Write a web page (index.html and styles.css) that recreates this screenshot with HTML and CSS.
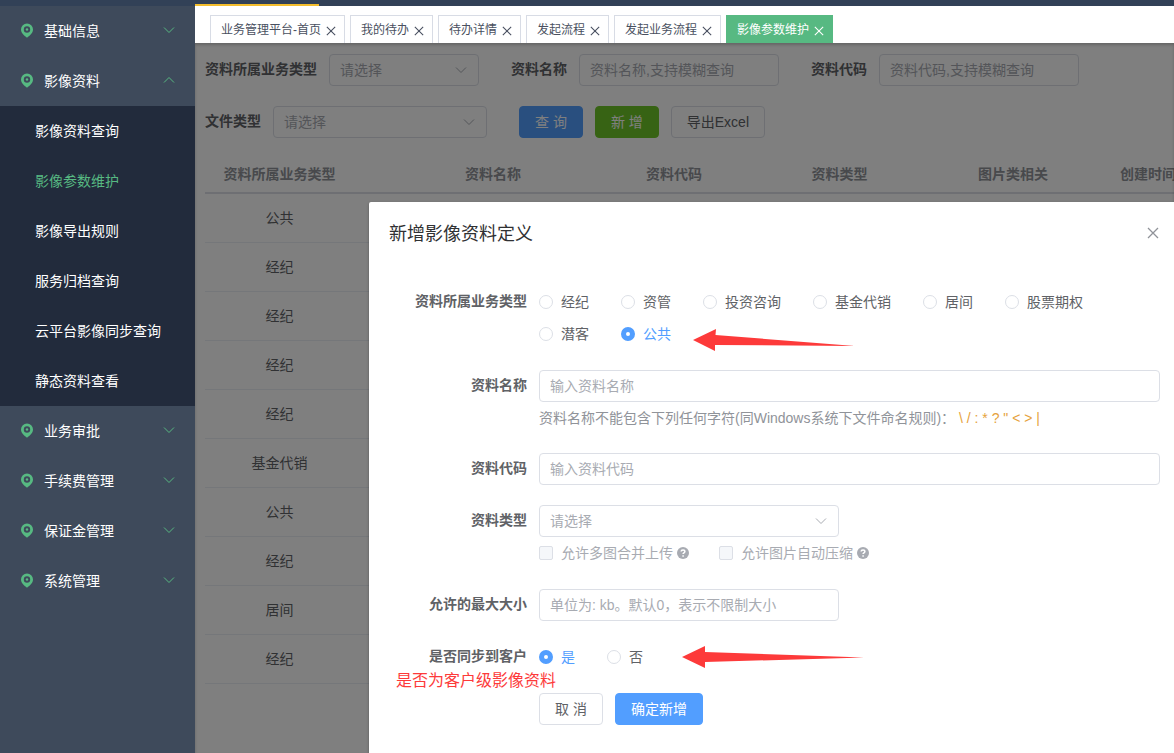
FILE: index.html
```html
<!DOCTYPE html>
<html lang="zh-CN">
<head>
  <meta charset="UTF-8">
  <meta name="viewport" content="width=device-width, initial-scale=1.0">
  <title>影像参数维护</title>
  <link rel="stylesheet" href="styles.css">
</head>
<body>
  <!-- Shared icons -->
  <svg class="icon-defs" aria-hidden="true">
    <symbol id="pin" viewBox="0 0 12 14">
      <path fill-rule="evenodd" d="M6 0a6 6 0 0 1 6 6c0 3.400-3 6-6 8.200C3 12 0 9.400 0 6a6 6 0 0 1 6-6zm0 2.800a3.200 3.200 0 1 0 0 6.400 3.200 3.200 0 0 0 0-6.400z"/>
      <circle cx="6" cy="6" r="1.200"/>
    </symbol>
    <symbol id="arrow-down" viewBox="0 0 12 12">
      <path d="M1 3.500l5 5 5-5" fill="none" stroke="currentColor"/>
    </symbol>
    <symbol id="arrow-up" viewBox="0 0 12 12">
      <path d="M1 8.500l5-5 5 5" fill="none" stroke="currentColor"/>
    </symbol>
    <symbol id="close" viewBox="0 0 12 12">
      <path d="M1 1l10 10M11 1L1 11" fill="none" stroke="currentColor" stroke-width="1.300"/>
    </symbol>
    <symbol id="question" viewBox="0 0 12 12">
      <circle cx="6" cy="6" r="6"/>
      <path d="M4.200 4.600c0-2.300 3.700-2.300 3.700 0 0 1.300-1.800 1.300-1.800 2.500M6.100 8.200v1.500" fill="none" stroke="#fff" stroke-width="1.500"/>
    </symbol>
  </svg>

  <header class="topbar">
    <div class="topbar-active"></div>
  </header>

  <div class="layout">
    <!-- Sidebar menu -->
    <nav class="sidebar">
      <a class="menu-item" href="#"><svg class="pin"><use href="#pin"/></svg><span>基础信息</span><svg class="arrow"><use href="#arrow-down"/></svg></a>
      <a class="menu-item" href="#"><svg class="pin"><use href="#pin"/></svg><span>影像资料</span><svg class="arrow"><use href="#arrow-up"/></svg></a>
      <div class="submenu">
        <a href="#">影像资料查询</a>
        <a class="active" href="#">影像参数维护</a>
        <a href="#">影像导出规则</a>
        <a href="#">服务归档查询</a>
        <a href="#">云平台影像同步查询</a>
        <a href="#">静态资料查看</a>
      </div>
      <a class="menu-item" href="#"><svg class="pin"><use href="#pin"/></svg><span>业务审批</span><svg class="arrow"><use href="#arrow-down"/></svg></a>
      <a class="menu-item" href="#"><svg class="pin"><use href="#pin"/></svg><span>手续费管理</span><svg class="arrow"><use href="#arrow-down"/></svg></a>
      <a class="menu-item" href="#"><svg class="pin"><use href="#pin"/></svg><span>保证金管理</span><svg class="arrow"><use href="#arrow-down"/></svg></a>
      <a class="menu-item" href="#"><svg class="pin"><use href="#pin"/></svg><span>系统管理</span><svg class="arrow"><use href="#arrow-down"/></svg></a>
    </nav>

    <div class="main">
      <!-- Opened pages -->
      <div class="tabs">
        <div class="tab"><a href="#">业务管理平台-首页</a><button type="button" aria-label="关闭"><svg><use href="#close"/></svg></button></div>
        <div class="tab"><a href="#">我的待办</a><button type="button" aria-label="关闭"><svg><use href="#close"/></svg></button></div>
        <div class="tab"><a href="#">待办详情</a><button type="button" aria-label="关闭"><svg><use href="#close"/></svg></button></div>
        <div class="tab"><a href="#">发起流程</a><button type="button" aria-label="关闭"><svg><use href="#close"/></svg></button></div>
        <div class="tab"><a href="#">发起业务流程</a><button type="button" aria-label="关闭"><svg><use href="#close"/></svg></button></div>
        <div class="tab active"><a href="#">影像参数维护</a><button type="button" aria-label="关闭"><svg><use href="#close"/></svg></button></div>
      </div>

      <div class="content">
        <!-- Search filters -->
        <form class="filters">
          <div class="filter">
            <label for="f-biz">资料所属业务类型</label>
            <div class="select select-small">
              <select id="f-biz"><option>请选择</option></select>
              <svg><use href="#arrow-down"/></svg>
            </div>
          </div>
          <div class="filter">
            <label for="f-name">资料名称</label>
            <input class="input filter-input" type="text" id="f-name" placeholder="资料名称,支持模糊查询">
          </div>
          <div class="filter">
            <label for="f-code">资料代码</label>
            <input class="input filter-input" type="text" id="f-code" placeholder="资料代码,支持模糊查询">
          </div>
          <div class="filter">
            <label for="f-file">文件类型</label>
            <div class="select select-medium">
              <select id="f-file"><option>请选择</option></select>
              <svg><use href="#arrow-down"/></svg>
            </div>
          </div>
          <div class="filter">
            <button class="btn btn-primary" type="button">查 询</button>
            <button class="btn btn-success" type="button">新 增</button>
            <button class="btn" type="button">导出Excel</button>
          </div>
        </form>

        <!-- Result list -->
        <table class="list">
          <colgroup>
            <col class="col-biz"><col class="col-name"><col class="col-code"><col class="col-type"><col class="col-image"><col>
          </colgroup>
          <thead>
            <tr><th>资料所属业务类型</th><th>资料名称</th><th>资料代码</th><th>资料类型</th><th>图片类相关</th><th>创建时间</th></tr>
          </thead>
          <tbody>
            <tr><td>公共</td><td></td><td></td><td></td><td></td><td></td></tr>
            <tr><td>经纪</td><td></td><td></td><td></td><td></td><td></td></tr>
            <tr><td>经纪</td><td></td><td></td><td></td><td></td><td></td></tr>
            <tr><td>经纪</td><td></td><td></td><td></td><td></td><td></td></tr>
            <tr><td>经纪</td><td></td><td></td><td></td><td></td><td></td></tr>
            <tr><td>基金代销</td><td></td><td></td><td></td><td></td><td></td></tr>
            <tr><td>公共</td><td></td><td></td><td></td><td></td><td></td></tr>
            <tr><td>经纪</td><td></td><td></td><td></td><td></td><td></td></tr>
            <tr><td>居间</td><td></td><td></td><td></td><td></td><td></td></tr>
            <tr><td>经纪</td><td></td><td></td><td></td><td></td><td></td></tr>
          </tbody>
        </table>

        <!-- Dialog -->
        <div class="mask">
          <div class="dialog" role="dialog" aria-labelledby="dialog-title">
            <div class="dialog-header">
              <h2 id="dialog-title">新增影像资料定义</h2>
              <button class="dialog-close" type="button" aria-label="关闭"><svg><use href="#close"/></svg></button>
            </div>

            <form class="form">
              <div class="form-label" id="l-biz">资料所属业务类型</div>
              <div class="options" role="radiogroup" aria-labelledby="l-biz">
                <label class="option"><input type="radio" name="biz"><span>经纪</span></label>
                <label class="option"><input type="radio" name="biz"><span>资管</span></label>
                <label class="option"><input type="radio" name="biz"><span>投资咨询</span></label>
                <label class="option"><input type="radio" name="biz"><span>基金代销</span></label>
                <label class="option"><input type="radio" name="biz"><span>居间</span></label>
                <label class="option"><input type="radio" name="biz"><span>股票期权</span></label>
                <label class="option"><input type="radio" name="biz"><span>潜客</span></label>
                <label class="option"><input type="radio" name="biz" checked><span>公共</span></label>
              </div>

              <label class="form-label" for="name">资料名称</label>
              <div>
                <input class="input" type="text" id="name" placeholder="输入资料名称">
                <div class="hint">资料名称不能包含下列任何字符(同Windows系统下文件命名规则)： <span class="chars">\ / : * ? " &lt; &gt; |</span></div>
              </div>

              <label class="form-label" for="code">资料代码</label>
              <div><input class="input" type="text" id="code" placeholder="输入资料代码"></div>

              <label class="form-label" for="type">资料类型</label>
              <div>
                <div class="select select-large">
                  <select id="type"><option>请选择</option></select>
                  <svg><use href="#arrow-down"/></svg>
                </div>
                <div class="options checks">
                  <label class="option"><input type="checkbox" disabled><span>允许多图合并上传</span><svg><use href="#question"/></svg></label>
                  <label class="option"><input type="checkbox" disabled><span>允许图片自动压缩</span><svg><use href="#question"/></svg></label>
                </div>
              </div>

              <label class="form-label" for="size">允许的最大大小</label>
              <div><input class="input size-input" type="text" id="size" placeholder="单位为: kb。默认0，表示不限制大小"></div>

              <div class="form-label" id="l-sync">是否同步到客户</div>
              <div class="options" role="radiogroup" aria-labelledby="l-sync">
                <label class="option"><input type="radio" name="sync" checked><span>是</span></label>
                <label class="option"><input type="radio" name="sync"><span>否</span></label>
              </div>

              <div class="form-buttons">
                <button class="btn" type="button">取 消</button>
                <button class="btn btn-primary" type="button">确定新增</button>
              </div>
            </form>

            <!-- Red notes drawn over the form -->
            <svg class="note-arrow note-arrow-top" viewBox="0 0 162 22">
              <path d="M0 11L23 0l-.500 6L162 17 22 16v6z"/>
            </svg>
            <svg class="note-arrow note-arrow-bottom" viewBox="0 0 182 22">
              <path d="M0 11L23 0v6l159 5.500L23 16v6z"/>
            </svg>
            <p class="note-text">是否为客户级影像资料</p>
          </div>
        </div>
      </div>
    </div>
  </div>
</body>
</html>
```
FILE: styles.css
```css
* {
  box-sizing: border-box;
}

body {
  margin: 0;
  height: 100vh;
  display: flex;
  flex-direction: column;
  overflow: hidden;
  font-family: "Liberation Sans", "Noto Sans CJK SC", sans-serif;
  font-size: 14px;
  color: #606266;
  background: #fff;
}

a {
  color: inherit;
  text-decoration: none;
}

button,
input,
select {
  font: inherit;
  color: inherit;
}

.icon-defs {
  display: none;
}

/* Top bar */
.topbar {
  flex: none;
  height: 6px;
  padding: 4px 0 0 195px;
  background: #324157;
}

.topbar-active {
  width: 124px;
  height: 2px;
  background: #f3bd2d;
}

.layout {
  flex: 1;
  display: flex;
  min-height: 0;
}

/* Sidebar */
.sidebar {
  flex: none;
  width: 195px;
  background: #3e4a5b;
  color: #fff;
}

.menu-item {
  display: flex;
  align-items: center;
  height: 50px;
  padding: 0 20px 2px 21px;
}

.menu-item span {
  flex: 1;
}

.pin {
  width: 12px;
  height: 15px;
  margin-right: 11px;
  fill: #57b982;
}

.arrow {
  width: 12px;
  height: 12px;
  color: #57b982;
}

.submenu {
  background: #222b3c;
}

.submenu a {
  display: block;
  padding-left: 35px;
  line-height: 50px;
}

.submenu .active {
  color: #57b982;
}

/* Tabs */
.main {
  flex: 1;
  min-width: 0;
  display: flex;
  flex-direction: column;
}

.tabs {
  display: flex;
  gap: 5px;
  padding: 9px 15px 0;
  background: #fff;
  font-size: 12px;
  color: #495060;
}

.tab {
  display: flex;
  align-items: center;
  gap: 5px;
  height: 28px;
  padding: 0 8px 2px 10px;
  border: 1px solid #d8dce5;
  border-bottom: 0;
}

.tab.active {
  background: #57b982;
  border-color: #57b982;
  color: #fff;
}

.tab button {
  display: flex;
  padding: 4px 0 0;
  border: 0;
  background: none;
}

.tab svg {
  width: 10px;
  height: 10px;
}

.content {
  position: relative;
  flex: 1;
  min-height: 0;
  padding: 11px 0 0 10px;
  overflow: hidden;
}

/* Inputs */
.input {
  display: block;
  width: 100%;
  height: 32px;
  padding: 0 10px;
  border: 1px solid #dcdfe6;
  border-radius: 4px;
  background: #fff;
}

.input::placeholder {
  color: #a8abb2;
  opacity: 1;
}

.select {
  display: grid;
  align-items: center;
}

.select select {
  grid-area: 1 / 1;
  width: 100%;
  height: 32px;
  padding: 0 10px;
  border: 1px solid #dcdfe6;
  border-radius: 4px;
  background: #fff;
  color: #a8abb2;
  appearance: none;
}

.select svg {
  grid-area: 1 / 1;
  justify-self: end;
  width: 12px;
  height: 12px;
  margin-right: 12px;
  color: #a8abb2;
  pointer-events: none;
}

.select-small {
  width: 150px;
}

.select-medium {
  width: 214px;
}

.select-large,
.size-input {
  width: 300px;
}

/* Buttons */
.btn {
  height: 32px;
  padding: 0 15px 2px;
  border: 1px solid #dcdfe6;
  border-radius: 4px;
  background: #fff;
  white-space: nowrap;
}

.btn-primary {
  border-color: #529eff;
  background: #529eff;
  color: #fff;
}

.btn-success {
  border-color: #6fc728;
  background: #6fc728;
  color: #fff;
}

/* Filters */
.filters {
  display: flex;
  flex-wrap: wrap;
  gap: 20px 32px;
}

.filter {
  display: flex;
  gap: 12px;
}

.filter label {
  font-weight: bold;
  line-height: 30px;
}

.filter-input {
  width: 200px;
}

/* List */
.list {
  width: 100%;
  min-width: 1028px;
  margin-top: 16px;
  table-layout: fixed;
  border-collapse: separate;
  border-spacing: 0;
  text-align: center;
}

.list th {
  height: 40px;
  padding: 0;
  border-bottom: 2px solid #dcdfe6;
  color: #909399;
}

.list td {
  height: 49px;
  padding: 0 0 2px;
  border-bottom: 1px solid #ebeef5;
}

.col-biz {
  width: 149px;
}

.col-name {
  width: 278px;
}

.col-code {
  width: 84px;
}

.col-type {
  width: 247px;
}

.col-image {
  width: 100px;
}

/* Dialog */
.mask {
  position: absolute;
  inset: 0;
  display: flex;
  padding: 159px 0 0 174px;
  background: rgba(0, 0, 0, 0.5);
  box-shadow: inset 0 2px 3px rgba(0, 0, 0, 0.2);
}

.dialog {
  position: relative;
  flex: 1;
  padding: 16px 14px 0 20px;
  border-radius: 2px 0 0 0;
  background: #fff;
  box-shadow: 0 1px 3px rgba(0, 0, 0, 0.3);
}

.dialog-header {
  display: flex;
  align-items: center;
  justify-content: space-between;
  height: 30px;
}

.dialog-header h2 {
  margin: 0;
  padding-bottom: 2px;
  font-size: 18px;
  font-weight: normal;
  color: #303133;
}

.dialog-close {
  display: flex;
  padding: 1px;
  border: 0;
  background: none;
  color: #909399;
}

.dialog-close svg {
  width: 12px;
  height: 12px;
}

/* Form */
.form {
  display: grid;
  grid-template-columns: 138px 1fr;
  gap: 20px 12px;
  margin-top: 38px;
}

.form-label {
  font-weight: bold;
  line-height: 30px;
  text-align: right;
}

.hint {
  padding-top: 1px;
  line-height: 30px;
  color: #909399;
}

.chars {
  color: #e6a23c;
}

.options {
  display: flex;
  flex-wrap: wrap;
  column-gap: 32px;
}

.option {
  display: flex;
  align-items: center;
  height: 32px;
}

.option span {
  padding-bottom: 2px;
}

.option input {
  width: 14px;
  height: 14px;
  margin: 0 8px 0 0;
  border: 1px solid #dcdfe6;
  background: #fff;
  appearance: none;
}

.option input[type="radio"] {
  border-radius: 50%;
}

.option input[type="radio"]:checked {
  border: 5px solid #529eff;
}

.option input:checked + span {
  color: #529eff;
}

.option input[type="checkbox"] {
  border-radius: 2px;
  background: #f5f7fa;
}

.checks {
  column-gap: 30px;
  color: #a8abb2;
}

.option svg {
  width: 12px;
  height: 12px;
  margin-left: 4px;
  fill: #a8abb2;
}

.form-buttons {
  grid-column: 2;
  display: flex;
  gap: 12px;
}

/* Red notes */
.note-arrow {
  position: absolute;
  height: 22px;
  fill: #fd3a3a;
}

.note-arrow-top {
  left: 324px;
  top: 127px;
  width: 162px;
}

.note-arrow-bottom {
  left: 313px;
  top: 444px;
  width: 182px;
}

.note-text {
  position: absolute;
  left: 27px;
  top: 467px;
  margin: 0;
  font-size: 16px;
  line-height: 24px;
  color: #fd3a3a;
}
```
